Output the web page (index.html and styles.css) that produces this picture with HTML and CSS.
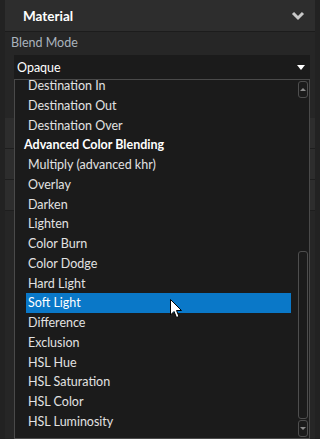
FILE: index.html
```html
<!DOCTYPE html>
<html lang="en">
<head>
    <meta charset="UTF-8">
    <meta name="viewport" content="width=device-width, initial-scale=1.0">
    <title>Material</title>
    <link rel="stylesheet" href="styles.css">
</head>
<body>

<div class="panel">
    <div class="header">
        <span class="title">Material</span>
        <svg class="chevron" width="14" height="10" viewBox="0 0 14 10">
            <path d="M2 2 L7 7 L12 2" fill="none" stroke="#c8c8c8" stroke-width="3"/>
        </svg>
    </div>

    <div class="field-label">Blend Mode</div>

    <div class="field">
        <div class="select">
            <span>Opaque</span>
            <span class="select-arrow"></span>
        </div>

        <!-- property rows hidden under the open list -->
        <div class="rows">
            <div class="row"></div>
            <div class="row"></div>
            <div class="row"></div>
        </div>

        <div class="popup">
            <div class="options">
                <div class="option">Destination In</div>
                <div class="option">Destination Out</div>
                <div class="option">Destination Over</div>
                <div class="option group">Advanced Color Blending</div>
                <div class="option">Multiply (advanced khr)</div>
                <div class="option">Overlay</div>
                <div class="option">Darken</div>
                <div class="option">Lighten</div>
                <div class="option">Color Burn</div>
                <div class="option">Color Dodge</div>
                <div class="option">Hard Light</div>
                <div class="option selected">Soft Light</div>
                <div class="option">Difference</div>
                <div class="option">Exclusion</div>
                <div class="option">HSL Hue</div>
                <div class="option">HSL Saturation</div>
                <div class="option">HSL Color</div>
                <div class="option">HSL Luminosity</div>
            </div>

            <div class="scrollbar">
                <div class="scroll-btn"><span class="arrow-up"></span></div>
                <div class="track">
                    <div class="thumb"></div>
                </div>
                <div class="scroll-btn"><span class="arrow-down"></span></div>
            </div>

            <svg class="cursor" width="13" height="20" viewBox="0 0 13 20">
                <path d="M0.5 0.5 L0.5 16 L4 12.5 L6.5 18.5 L9 17.5 L6.5 11.5 L11.5 11.5 Z" fill="#fff" stroke="#000" stroke-width="1"/>
            </svg>
        </div>
    </div>
</div>

</body>
</html>
```

FILE: styles.css
```css
body {
    margin: 0;
    background-color: #222222;
    font-family: Lato, "Noto Sans", sans-serif;
    font-size: 12.5px;
    color: #e2e2e2;
}
.panel {
    margin: 0 5px;
    height: 439px;
    background-color: #262626;
    overflow: hidden;
}
.header {
    height: 31px;
    background-color: #2d2d2d;
    border-bottom: 1px solid #1c1c1c;
    display: flex;
    align-items: center;
    justify-content: space-between;
    padding: 0 10px 0 18px;
}
.title {
    font-weight: bold;
    font-size: 13.5px;
    color: #ffffff;
}
.chevron {
    margin-top: 1px;
}
.field-label {
    padding: 3px 0 0 6px;
    height: 19px;
    color: #aab3bd;
}
.field {
    position: relative;
}
.select {
    margin: 1px 5px 0 9px;
    height: 24px;
    background-color: #1b1b1b;
    display: flex;
    align-items: center;
    justify-content: space-between;
    padding: 0 5px 0 3px;
    color: #ffffff;
}
.select-arrow {
    width: 0;
    height: 0;
    border-left: 4px solid transparent;
    border-right: 4px solid transparent;
    border-top: 5px solid #ffffff;
}
.rows {
    padding-top: 39px;
}
.row {
    height: 30px;
    background-color: #2d2d2d;
    border-bottom: 1px solid #1e1e1e;
}
.popup {
    position: absolute;
    top: 24px;
    left: 9px;
    right: 5px;
    height: 358px;
    background-color: #1b1b1b;
    border: 1px solid #4a4a4a;
    overflow: hidden;
    display: flex;
}
.options {
    flex: 1;
    margin-top: -4px;
    padding: 0 7px 0 11px;
}
.option {
    height: 19.75px;
    line-height: 19.75px;
    padding-left: 2px;
    white-space: nowrap;
}
.option.group {
    font-weight: bold;
    color: #ffffff;
    margin-left: -4px;
}
.option.selected {
    background-color: #0a78c8;
    color: #ffffff;
}
.scrollbar {
    width: 10px;
    margin-right: 1px;
    padding: 1px 0;
    display: flex;
    flex-direction: column;
}
.scroll-btn {
    height: 17px;
    border: 1px solid #4e4e4e;
    border-radius: 3px;
    box-sizing: border-box;
    display: flex;
    align-items: center;
    justify-content: center;
}
.arrow-up {
    width: 0;
    height: 0;
    border-left: 3px solid transparent;
    border-right: 3px solid transparent;
    border-bottom: 3px solid #8c8c8c;
}
.arrow-down {
    width: 0;
    height: 0;
    border-left: 3px solid transparent;
    border-right: 3px solid transparent;
    border-top: 3px solid #8c8c8c;
}
.track {
    flex: 1;
    display: flex;
    flex-direction: column;
    justify-content: flex-end;
    padding-bottom: 1px;
}
.thumb {
    height: 168px;
    border: 1px solid #4e4e4e;
    border-radius: 3px;
    box-sizing: border-box;
}
.cursor {
    position: absolute;
    left: 155px;
    top: 219px;
}
```
